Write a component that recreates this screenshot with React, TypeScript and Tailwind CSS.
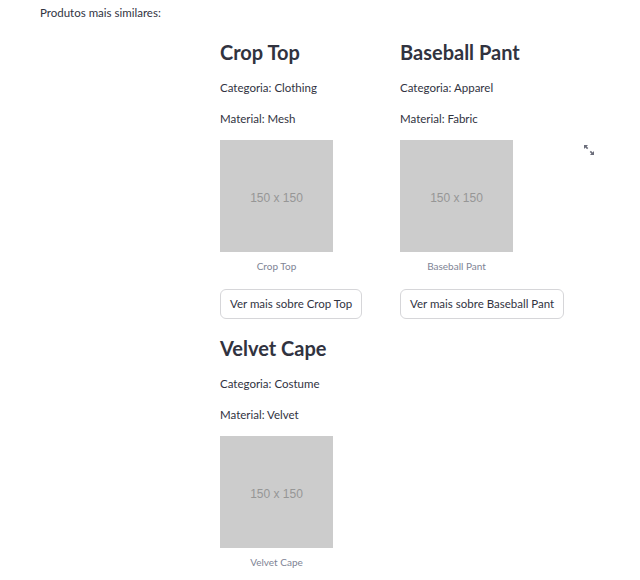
import React from 'react';

type Produto = { nome: string; categoria: string; material: string };

const produtos: Produto[] = [
  { nome: 'Crop Top', categoria: 'Clothing', material: 'Mesh' },
  { nome: 'Baseball Pant', categoria: 'Apparel', material: 'Fabric' },
  { nome: 'Velvet Cape', categoria: 'Costume', material: 'Velvet' },
];

function ExpandIcon() {
  return (
    <svg width="12" height="12" viewBox="0 0 12 12" fill="#6b6d7a">
      <path d="M1 1h4L3.6 2.4 5.3 4.1 4.1 5.3 2.4 3.6 1 5z" />
      <path d="M11 11H7l1.4-1.4-1.7-1.7 1.2-1.2 1.7 1.7L11 7z" />
    </svg>
  );
}

function Card({ p, showExpand }: { p: Produto; showExpand?: boolean }) {
  return (
    <div className="w-[180px] flex flex-col">
      <h2 className="text-[20px] font-bold leading-[28px] mt-[1px] text-[#31333F]">{p.nome}</h2>
      <p className="text-[11.5px] leading-[16px] mt-[14px]">Categoria: {p.categoria}</p>
      <p className="text-[11.5px] leading-[16px] mt-[15px]">Material: {p.material}</p>
      <div className="relative mt-[13px]">
        <div
          className="w-[113px] h-[112px] bg-[#cccccc] flex items-center justify-center pt-[3px] text-[12px] text-[#969696]"
          style={{ fontFamily: '"Liberation Sans", Arial, sans-serif' }}
        >
          150 x 150
        </div>
        {showExpand && (
          <div className="absolute left-[183px] top-[4px]">
            <ExpandIcon />
          </div>
        )}
      </div>
      <div className="w-[113px] text-center text-[10px] leading-[14px] mt-[7px] text-[#808495]">{p.nome}</div>
    </div>
  );
}

export default function App() {
  return (
    <div
      className="w-[640px] h-[580px] bg-white text-[#31333F] overflow-hidden"
      style={{ fontFamily: 'Lato, "Noto Sans", sans-serif' }}
    >
      <div className="pl-[40px] pt-[5px] text-[11.5px] leading-[16px]">Produtos mais similares:</div>
      <div className="pl-[220px] mt-[16px] flex flex-col">
        <div className="flex">
          {produtos.slice(0, 2).map((p, i) => (
            <div key={p.nome} className="flex flex-col">
              <Card p={p} showExpand={i === 1} />
              <div className="mt-[16px]">
                <button className="h-[30px] px-[9px] text-[11.5px] border border-[#d6d6d9] rounded-[6px] bg-white text-[#31333F]">
                  Ver mais sobre {p.nome}
                </button>
              </div>
            </div>
          ))}
        </div>
        <div className="mt-[14px]">
          <Card p={produtos[2]} />
        </div>
      </div>
    </div>
  );
}
